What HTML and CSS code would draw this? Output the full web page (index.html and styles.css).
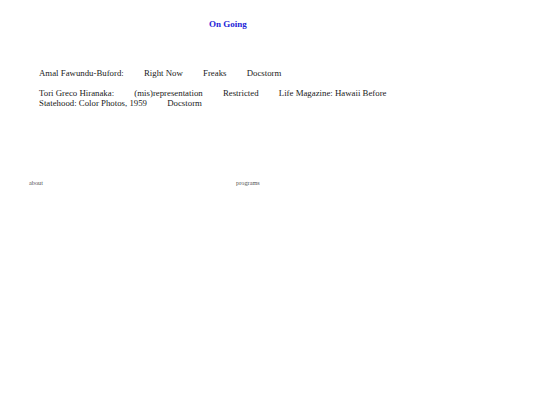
FILE: index.html
```html
<!DOCTYPE html>
<html>
<head>
<meta charset="utf-8">
<link rel="stylesheet" href="styles.css">
</head>
<body>
<div class="page">
  <h1 class="title">On Going</h1>
  <div class="shows">
    <p class="show">Amal Fawundu-Buford: <span class="gap"></span> Right Now <span class="gap"></span> Freaks <span class="gap"></span> Docstorm</p>
    <p class="show">Tori Greco Hiranaka: <span class="gap"></span> (mis)representation <span class="gap"></span> Restricted <span class="gap"></span> Life Magazine: Hawaii Before Statehood: Color Photos, 1959 <span class="gap"></span> Docstorm</p>
  </div>
  <nav class="footer">
    <span class="link">about</span>
    <span class="link">programs</span>
  </nav>
</div>
</body>
</html>
```
FILE: styles.css
```css
html, body {
  margin: 0;
  padding: 0;
  background: #ffffff;
}
.page {
  font-family: "Liberation Serif", "Times New Roman", serif;
  color: #1a1a1a;
}
.title {
  width: 456px;
  margin: 0;
  padding-top: 19px;
  text-align: center;
  font-size: 9px;
  line-height: 11px;
  font-weight: bold;
  color: #2424d8;
}
.shows {
  width: 360px;
  padding: 38px 0 0 39px;
}
.show {
  margin: 0 0 9px 0;
  font-size: 8.8px;
  line-height: 10px;
}
.show:last-child {
  padding-top: 1px;
}
.gap {
  display: inline-block;
  width: 15.8px;
}
.footer {
  display: grid;
  grid-template-columns: 207px auto;
  justify-content: start;
  padding: 62px 0 0 29px;
  font-size: 6.3px;
  color: #555555;
}
```
